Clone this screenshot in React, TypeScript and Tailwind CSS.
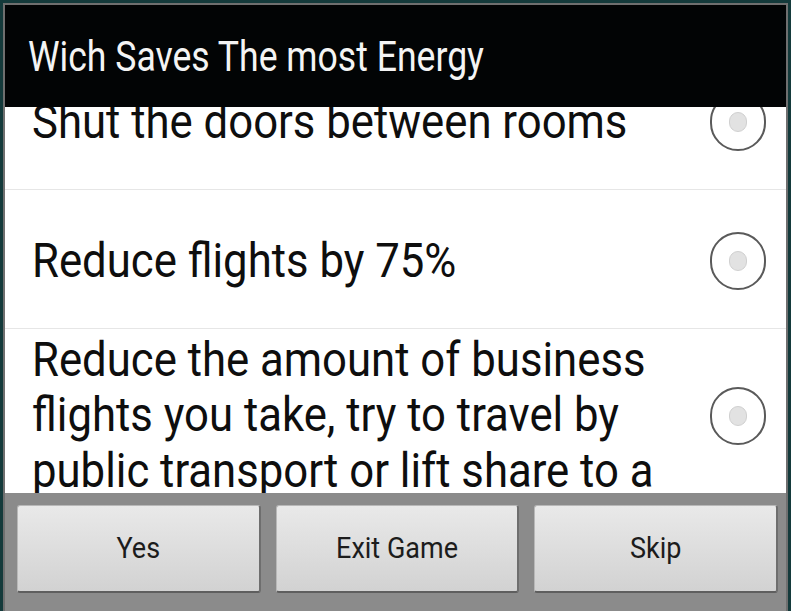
import React from 'react';

const options = [
  'Shut the doors between rooms',
  'Reduce flights by 75%',
  'Reduce the amount of business flights you take, try to travel by public transport or lift share to a',
];

function Radio() {
  return (
    <div className="w-[56px] h-[58px] rounded-full border-[2.5px] border-[#5a5a5a] flex items-center justify-center shrink-0">
      <div className="w-[18px] h-[20px] rounded-full bg-[#e2e2e2] border border-[#d0d0d0]" />
    </div>
  );
}

function DialogButton({ label }: { label: string }) {
  return (
    <button className="flex-1 h-[88px] rounded-[3px] bg-gradient-to-b from-[#e9e9e9] to-[#d2d2d2] border border-[#b8b8b8] border-b-2 border-r-2 border-b-[#5e5e5e] border-r-[#6e6e6e] text-[27px] text-[#1c1c1c]">
      <span className="inline-block scale-y-[1.1]">{label}</span>
    </button>
  );
}

export default function App() {
  return (
    <div
      className="w-[791px] h-[611px] bg-[#143a3b] pt-[3px] px-[3px] overflow-hidden"
      style={{ fontFamily: 'Roboto, "Noto Sans", sans-serif' }}
    >
      <div className="h-full flex flex-col border-2 border-b-0 border-[#6f6f6f]">
        <div className="h-[102px] bg-[#020405] flex items-center pl-[23px] pt-[3px] text-[#f4f4f4] text-[35.6px]">
          <span className="inline-block scale-y-[1.18]">Wich Saves The most Energy</span>
        </div>
        <div className="flex-1 bg-white overflow-hidden">
          <div className="-mt-[56px]">
            {options.map((text, i) => (
              <div
                key={i}
                className={`flex items-center min-h-[139px] pl-[27px] pr-[20px] pt-[10px] pb-[6px] ${
                  i < options.length - 1 ? 'border-b border-[#e6e6e6]' : ''
                }`}
              >
                <div className="flex-1 text-[43.7px] leading-[51px] text-[#0e0e0e] pr-[30px] scale-y-[1.085]">
                  {text}
                </div>
                <Radio />
              </div>
            ))}
          </div>
        </div>
        <div className="h-[118px] shrink-0 bg-[#8b8b8b] flex gap-[15px] pl-[12px] pr-[8px] pt-[12px]">
          <DialogButton label="Yes" />
          <DialogButton label="Exit Game" />
          <DialogButton label="Skip" />
        </div>
      </div>
    </div>
  );
}
